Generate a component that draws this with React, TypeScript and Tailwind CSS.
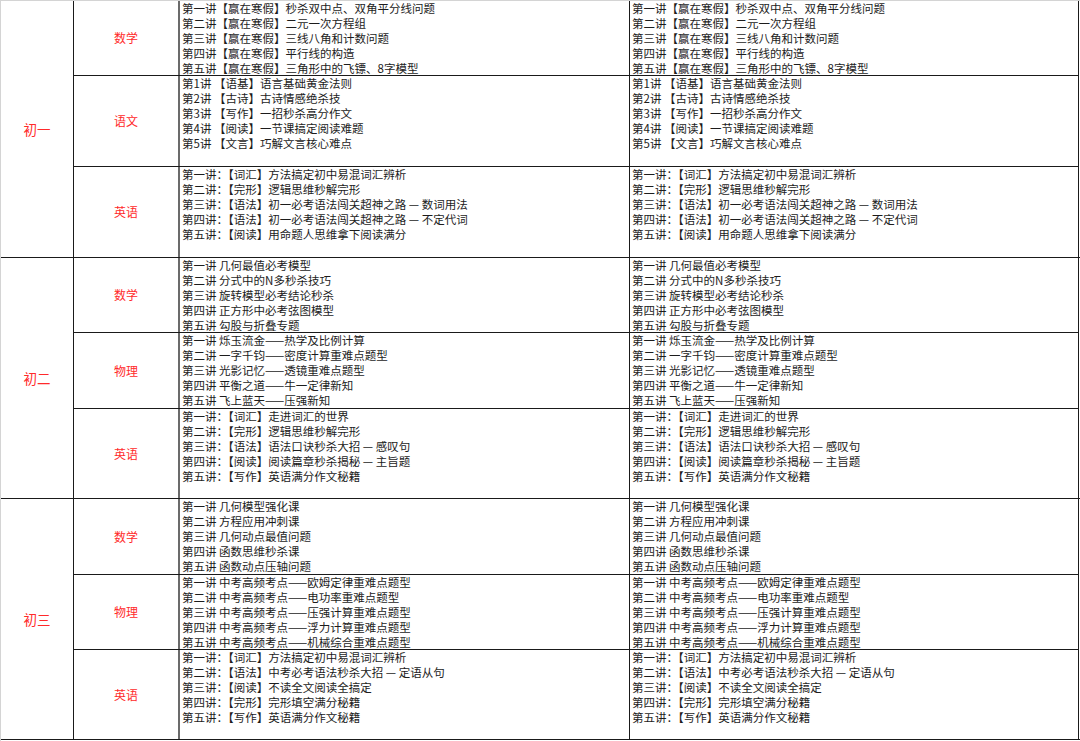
type Row = { subject: string; h: string; last?: boolean; lines: string[] };
type Grade = { name: string; rows: Row[] };

const grades: Grade[] = [
  {
    name: "初一",
    rows: [
      {
        subject: "数学",
        h: "h-[75px]",
        lines: [
          "第一讲【赢在寒假】秒杀双中点、双角平分线问题",
          "第二讲【赢在寒假】二元一次方程组",
          "第三讲【赢在寒假】三线八角和计数问题",
          "第四讲【赢在寒假】平行线的构造",
          "第五讲【赢在寒假】三角形中的飞镖、8字模型",
        ],
      },
      {
        subject: "语文",
        h: "h-[91px]",
        lines: [
          "第1讲 【语基】语言基础黄金法则",
          "第2讲 【古诗】古诗情感绝杀技",
          "第3讲 【写作】一招秒杀高分作文",
          "第4讲 【阅读】一节课搞定阅读难题",
          "第5讲 【文言】巧解文言核心难点",
        ],
      },
      {
        subject: "英语",
        h: "h-[90px]",
        last: true,
        lines: [
          "第一讲：【词汇】方法搞定初中易混词汇辨析",
          "第二讲：【完形】逻辑思维秒解完形",
          "第三讲：【语法】初一必考语法闯关超神之路 — 数词用法",
          "第四讲：【语法】初一必考语法闯关超神之路 — 不定代词",
          "第五讲：【阅读】用命题人思维拿下阅读满分",
        ],
      },
    ],
  },
  {
    name: "初二",
    rows: [
      {
        subject: "数学",
        h: "h-[75px]",
        lines: [
          "第一讲 几何最值必考模型",
          "第二讲 分式中的N多秒杀技巧",
          "第三讲 旋转模型必考结论秒杀",
          "第四讲 正方形中必考弦图模型",
          "第五讲 勾股与折叠专题",
        ],
      },
      {
        subject: "物理",
        h: "h-[76px]",
        lines: [
          "第一讲 烁玉流金——热学及比例计算",
          "第二讲 一字千钧——密度计算重难点题型",
          "第三讲 光影记忆——透镜重难点题型",
          "第四讲 平衡之道——牛一定律新知",
          "第五讲 飞上蓝天——压强新知",
        ],
      },
      {
        subject: "英语",
        h: "h-[89px]",
        last: true,
        lines: [
          "第一讲：【词汇】走进词汇的世界",
          "第二讲：【完形】逻辑思维秒解完形",
          "第三讲：【语法】语法口诀秒杀大招 — 感叹句",
          "第四讲：【阅读】阅读篇章秒杀揭秘 — 主旨题",
          "第五讲：【写作】英语满分作文秘籍",
        ],
      },
    ],
  },
  {
    name: "初三",
    rows: [
      {
        subject: "数学",
        h: "h-[76px]",
        lines: [
          "第一讲 几何模型强化课",
          "第二讲 方程应用冲刺课",
          "第三讲 几何动点最值问题",
          "第四讲 函数思维秒杀课",
          "第五讲 函数动点压轴问题",
        ],
      },
      {
        subject: "物理",
        h: "h-[75px]",
        lines: [
          "第一讲 中考高频考点——欧姆定律重难点题型",
          "第二讲 中考高频考点——电功率重难点题型",
          "第三讲 中考高频考点——压强计算重难点题型",
          "第四讲 中考高频考点——浮力计算重难点题型",
          "第五讲 中考高频考点——机械综合重难点题型",
        ],
      },
      {
        subject: "英语",
        h: "h-[89px]",
        last: true,
        lines: [
          "第一讲：【词汇】方法搞定初中易混词汇辨析",
          "第二讲：【语法】中考必考语法秒杀大招 — 定语从句",
          "第三讲：【阅读】不读全文阅读全搞定",
          "第四讲：【完形】完形填空满分秘籍",
          "第五讲：【写作】英语满分作文秘籍",
        ],
      },
    ],
  },
];

function Lines({ lines, w }: { lines: string[]; w: string }) {
  return (
    <div className={`${w} h-full pl-[2px] text-[11.5px] leading-[15px] text-[#1c1c1c] whitespace-nowrap`}>
      {lines.map((l, i) => (
        <div key={i}>{l}</div>
      ))}
    </div>
  );
}

export default function App() {
  return (
    <div
      className="w-[1080px] h-[741px] bg-white border-t border-l border-[#d4d4d4] overflow-hidden"
      style={{ fontFamily: '"Microsoft YaHei", "Noto Sans CJK SC", sans-serif' }}
    >
      {grades.map((g) => (
        <div key={g.name} className="flex border-b border-[#1a1a1a]">
          {/* Grade cell */}
          <div className="w-[73px] shrink-0 border-r border-[#1a1a1a] flex items-center justify-center text-[13.5px] text-[#ff2a2a]">
            {g.name}
          </div>
          <div className="flex flex-col">
            {g.rows.map((r) => (
              <div
                key={r.subject}
                className={`${r.h} flex ${r.last ? "" : "border-b border-[#1a1a1a]"}`}
              >
                <div className="w-[106px] shrink-0 border-r-2 border-[#6b6b6b] flex items-center justify-center text-[12px] text-[#ff2a2a]">
                  {r.subject}
                </div>
                <div className="border-r border-[#1a1a1a]">
                  <Lines lines={r.lines} w="w-[449px]" />
                </div>
                <div className="border-r border-[#1a1a1a]">
                  <Lines lines={r.lines} w="w-[448px]" />
                </div>
              </div>
            ))}
          </div>
        </div>
      ))}
    </div>
  );
}
